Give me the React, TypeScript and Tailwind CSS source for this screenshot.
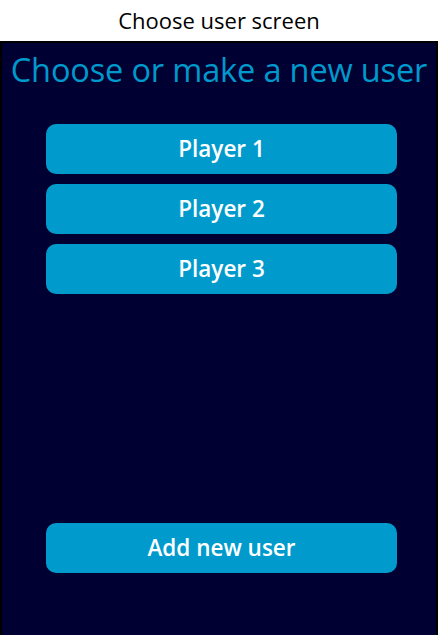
export default function App() {
  const players = ['Player 1', 'Player 2', 'Player 3'];

  return (
    <div className="w-[438px] h-[635px] bg-white flex flex-col" style={{ fontFamily: '"Open Sans", "Noto Sans", sans-serif' }}>
      <div className="h-[41px] flex items-center justify-center text-[22px] text-black">
        Choose user screen
      </div>
      <div className="flex-1 flex flex-col bg-[#000033] border-t-2 border-l-2 border-r-2 border-black">
        <h1 className="text-center text-[32.5px] leading-none text-[#0099cc] mt-[11px] tracking-[-0.15px] whitespace-nowrap">
          Choose or make a new user
        </h1>
        <div className="flex flex-col gap-[10px] pl-[44px] pr-[39px] mt-[37px]">
          {players.map((p) => (
            <button
              key={p}
              className="h-[50px] rounded-[10px] bg-[#009bcc] text-white text-[22.5px] font-semibold"
            >
              {p}
            </button>
          ))}
        </div>
        <div className="mt-auto pl-[44px] pr-[39px] pb-[62px]">
          <button className="w-full h-[50px] rounded-[10px] bg-[#009bcc] text-white text-[22.5px] font-semibold">
            Add new user
          </button>
        </div>
      </div>
    </div>
  );
}
